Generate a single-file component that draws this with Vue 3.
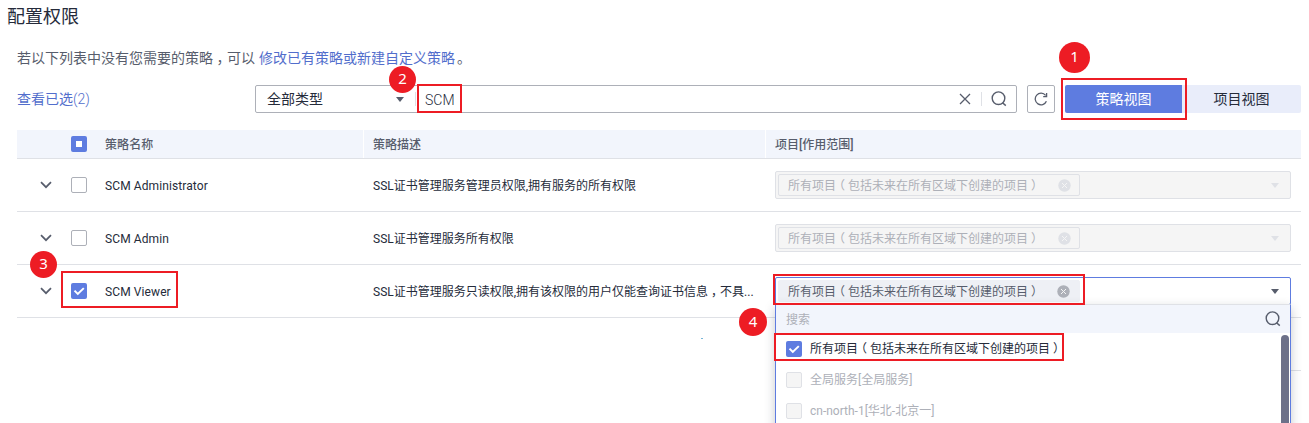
<script setup>
const rows = [
  { name: 'SCM Administrator', desc: 'SSL证书管理服务管理员权限,拥有服务的所有权限', checked: false },
  { name: 'SCM Admin', desc: 'SSL证书管理服务所有权限', checked: false },
  { name: 'SCM Viewer', desc: 'SSL证书管理服务只读权限,拥有该权限的用户仅能查询证书信息', rest: '不具...', checked: true }
]
const others = ['全局服务[全局服务]', 'cn-north-1[华北-北京一]']
</script>

<template>
  <main class="page">
    <h1>配置权限</h1>
    <p class="hint"><span>若以下列表中没有您需要的策略<i class="mark">，</i>可以</span><a>修改已有策略或新建自定义策略</a><span>。</span></p>

    <div class="toolbar">
      <a class="selected">查看已选<span class="num">(2)</span></a>
      <div class="search">
        <div class="type"><span>全部类型</span><b class="caret"></b></div>
        <span class="query">SCM</span>
        <svg class="clear" width="12" height="12" viewBox="0 0 12 12"><path d="M1 1l10 10M11 1L1 11" /></svg>
        <i class="divider"></i>
        <svg class="glass" width="16" height="16" viewBox="0 0 16 16"><circle cx="7.5" cy="7.2" r="6.3" /><path d="M11.5 11.7l3.3 2.9" /></svg>
      </div>
      <button class="refresh">
        <svg width="14" height="14" viewBox="0 0 14 14"><path d="M12.4 9.2A5.8 5.8 0 1 1 11.6 3.4M12.6 1v3.6H9.2" /></svg>
      </button>
      <div class="tabs"><button class="on">策略视图</button><button>项目视图</button></div>
    </div>

    <section class="table">
      <div class="row head">
        <span class="exp"></span>
        <span class="chk"><i class="box part"></i></span>
        <span class="name">策略名称</span>
        <span class="desc">策略描述</span>
        <span class="scope">项目[作用范围]</span>
      </div>
      <div v-for="r in rows" :key="r.name" class="row">
        <span class="exp"><svg width="12" height="8" viewBox="0 0 12 8"><path d="M1 1.2l5 5 5-5" /></svg></span>
        <span class="chk">
          <i class="box" :class="{ full: r.checked }"><svg v-if="r.checked" width="16" height="16" viewBox="0 0 16 16"><path d="M3.5 7.6l3.3 3.3 6-5.8" /></svg></i>
        </span>
        <span class="name">{{ r.name }}</span>
        <span class="desc">{{ r.desc }}<template v-if="r.rest"><i class="mark">，</i>{{ r.rest }}</template></span>
        <div class="scope">
          <div class="select" :class="{ open: r.checked }">
            <div class="tag">
              <span>所有项目<i class="mark">（</i>包括未来在所有区域下创建的项目<i class="mark">）</i></span>
              <svg width="13" height="13" viewBox="0 0 13 13"><circle cx="6.5" cy="6.5" r="6.2" /><path d="M4 4l5 5M9 4l-5 5" /></svg>
            </div>
            <b class="caret"></b>
            <div v-if="r.checked" class="menu">
              <div class="find"><span>搜索</span><svg class="glass" width="16" height="16" viewBox="0 0 16 16"><circle cx="7.5" cy="7.2" r="6.3" /><path d="M11.5 11.7l3.3 2.9" /></svg></div>
              <div class="list">
                <div class="opts">
                  <div class="opt"><i class="box full"><svg width="16" height="16" viewBox="0 0 16 16"><path d="M3.5 7.6l3.3 3.3 6-5.8" /></svg></i><span>所有项目<i class="mark">（</i>包括未来在所有区域下创建的项目<i class="mark">）</i></span></div>
                  <div v-for="o in others" :key="o" class="opt off"><i class="box"></i><span>{{ o }}</span></div>
                </div>
                <div class="bar"></div>
              </div>
            </div>
          </div>
        </div>
      </div>
      <div class="row blank"></div>
    </section>

    <div class="frame f1"></div>
    <div class="frame f2"></div>
    <div class="frame f3"></div>
    <div class="frame f4"></div>
    <div class="frame f5"></div>
    <span class="badge b1">1</span>
    <span class="badge b2">2</span>
    <span class="badge b3">3</span>
    <span class="badge b4">4</span>
    <i class="speck"></i>
  </main>
</template>

<style>
body { background: #fff; }
</style>

<style scoped>
* { box-sizing: border-box; }
.page { position: relative; width: 1309px; height: 423px; overflow: hidden; color: #252b3a; font: 12px/18px Roboto, "Noto Sans CJK SC", sans-serif; }
i { font-style: normal; }
h1 { margin: 0; padding: 4px 0 0 7px; font-size: 18px; line-height: 26px; font-weight: 400; height: 32px; }
.hint { margin: 0; padding: 16px 0 0 17px; height: 53px; display: flex; gap: 4px; font-size: 14px; line-height: 20px; color: #575d6c; }
.hint span:last-child { margin-left: -2px; }
a { color: #526ecc; }
.mark { font-feature-settings: "halt"; margin: 0 .25em; }
svg { display: block; fill: none; flex: none; }
.toolbar { display: flex; height: 28px; margin: 0 8px 17px 17px; font-size: 14px; line-height: 28px; }
.selected { width: 238px; }
.num { font-weight: 300; }
.search { width: 762px; border: 1px solid #adb0b8; border-radius: 2px; display: flex; align-items: center; line-height: 26px; }
.type { width: 160px; padding: 0 11px; height: 14px; border-right: 1px solid #dfe1e6; display: flex; align-items: center; justify-content: space-between; }
.caret { width: 0; height: 0; border: 4px solid transparent; border-top: 5px solid #575d6c; border-bottom: 0; }
.query { margin-left: 9px; padding-top: 1px; flex: 1; font-weight: 300; }
.clear path { stroke: #575d6c; stroke-width: 1.3; }
.divider { width: 1px; height: 14px; background: #dfe1e6; margin: 0 9px 0 10px; }
.glass circle, .glass path { stroke: #575d6c; stroke-width: 1.4; }
.search .glass { margin-right: 9px; }
button { font: inherit; color: inherit; border: 0; padding: 0; margin: 0; }
.refresh { width: 28px; margin: 0 10px; border: 1px solid #adb0b8; border-radius: 2px; background: #fff; display: flex; align-items: center; justify-content: center; }
.refresh path { stroke: #575d6c; stroke-width: 1.3; }
.tabs { display: flex; }
.tabs button { width: 119px; background: #e9edfa; border-radius: 0 2px 2px 0; }
.tabs .on { width: 117px; background: #5e7ce0; color: #fff; border-radius: 2px 0 0 2px; }
.table { margin: 0 8px 0 17px; }
.row { display: flex; align-items: center; height: 53px; border-bottom: 1px solid #dfe1e6; }
.head { height: 29px; background: #f2f5fc; color: #575d6c; font-weight: 500; }
.blank { width: 10px; margin-left: auto; }
.exp { width: 44px; padding-left: 23px; }
.exp path { stroke: #575d6c; stroke-width: 1.7; }
.chk { width: 34px; padding-left: 10px; }
.name { width: 268px; padding: 2px 0 0 10px; letter-spacing: .1px; }
.desc { width: 402px; padding: 2px 0 0 10px; white-space: nowrap; }
.scope { width: 536px; padding: 0 10px; }
.head .desc, .head .scope { border-left: 1px solid #fff; height: 28px; line-height: 28px; padding: 1px 0 0 9px; }
.box { display: block; width: 16px; height: 16px; flex: none; border: 1px solid #adb0b8; border-radius: 2px; background: #fff; }
.full { background: #5e7ce0; border: 0; }
.full path { stroke: #fff; stroke-width: 2; }
.part { border: 5px solid #5e7ce0; }
.select { position: relative; width: 516px; height: 28px; border: 1px solid #dfe1e6; border-radius: 2px; background: #f5f5f5; color: #adb0b8; display: flex; align-items: center; justify-content: space-between; padding: 0 11px 0 2px; }
.select > .caret { border-top-color: #dfe1e6; }
.tag { width: 302px; height: 22px; border: 1px solid #dfe1e6; border-radius: 2px; display: flex; align-items: center; justify-content: space-between; padding: 0 8px 0 9px; }
.tag span { padding-top: 2px; }
.tag circle { fill: #dfe1e6; }
.tag path { stroke: #f5f5f5; stroke-width: 1; }
.open { background: #fff; border-color: #5e7ce0; color: #575d6c; z-index: 2; }
.open > .caret { border-top-color: #575d6c; }
.open .tag { border-color: #eef0f5; background: #eef0f5; padding-right: 9px; }
.open .tag circle { fill: #adb0b8; }
.menu { position: absolute; left: -1px; top: 26px; width: 516px; height: 150px; background: #fff; border: 1px solid #5e7ce0; border-top: 1px solid #dfe1e6; box-shadow: 0 4px 10px rgba(37, 43, 58, .25); color: #252b3a; }
.find { height: 28px; background: #f2f5fc; display: flex; align-items: center; justify-content: space-between; padding: 0 9px 0 10px; color: #adb0b8; }
.find span { padding-top: 1px; }
.list { display: flex; }
.opts { flex: 1; }
.opt { height: 31px; display: flex; align-items: center; gap: 8px; padding-left: 10px; }
.off { color: #adb0b8; }
.off .box { background: #f5f5f5; border-color: #dfe1e6; }
.bar { width: 8px; height: 140px; margin: 2px 1px 0 0; background: #6c7089; border-radius: 4px 4px 0 0; }
.frame { position: absolute; z-index: 5; border: 2px solid #ed1c24; }
.f1 { left: 1061px; top: 78px; width: 126px; height: 42px; }
.f2 { left: 417px; top: 84px; width: 45px; height: 29px; }
.f3 { left: 61px; top: 271px; width: 117px; height: 37px; }
.f4 { left: 773px; top: 274px; width: 312px; height: 31px; }
.f5 { left: 774px; top: 333px; width: 290px; height: 28px; }
.badge { position: absolute; z-index: 6; width: 27px; height: 27px; border-radius: 50%; background: #ed1c24; color: #fff; font: 15px/25px "Noto Sans", sans-serif; text-align: center; }
.b1 { left: 1059px; top: 42px; width: 31px; height: 31px; line-height: 28px; }
.b2 { left: 389px; top: 66px; }
.b3 { left: 30px; top: 251px; }
.b4 { left: 739px; top: 308px; width: 28px; height: 28px; line-height: 27px; }
.speck { position: absolute; left: 701px; top: 338px; width: 2px; height: 1px; background: #78b6d8; }
</style>
